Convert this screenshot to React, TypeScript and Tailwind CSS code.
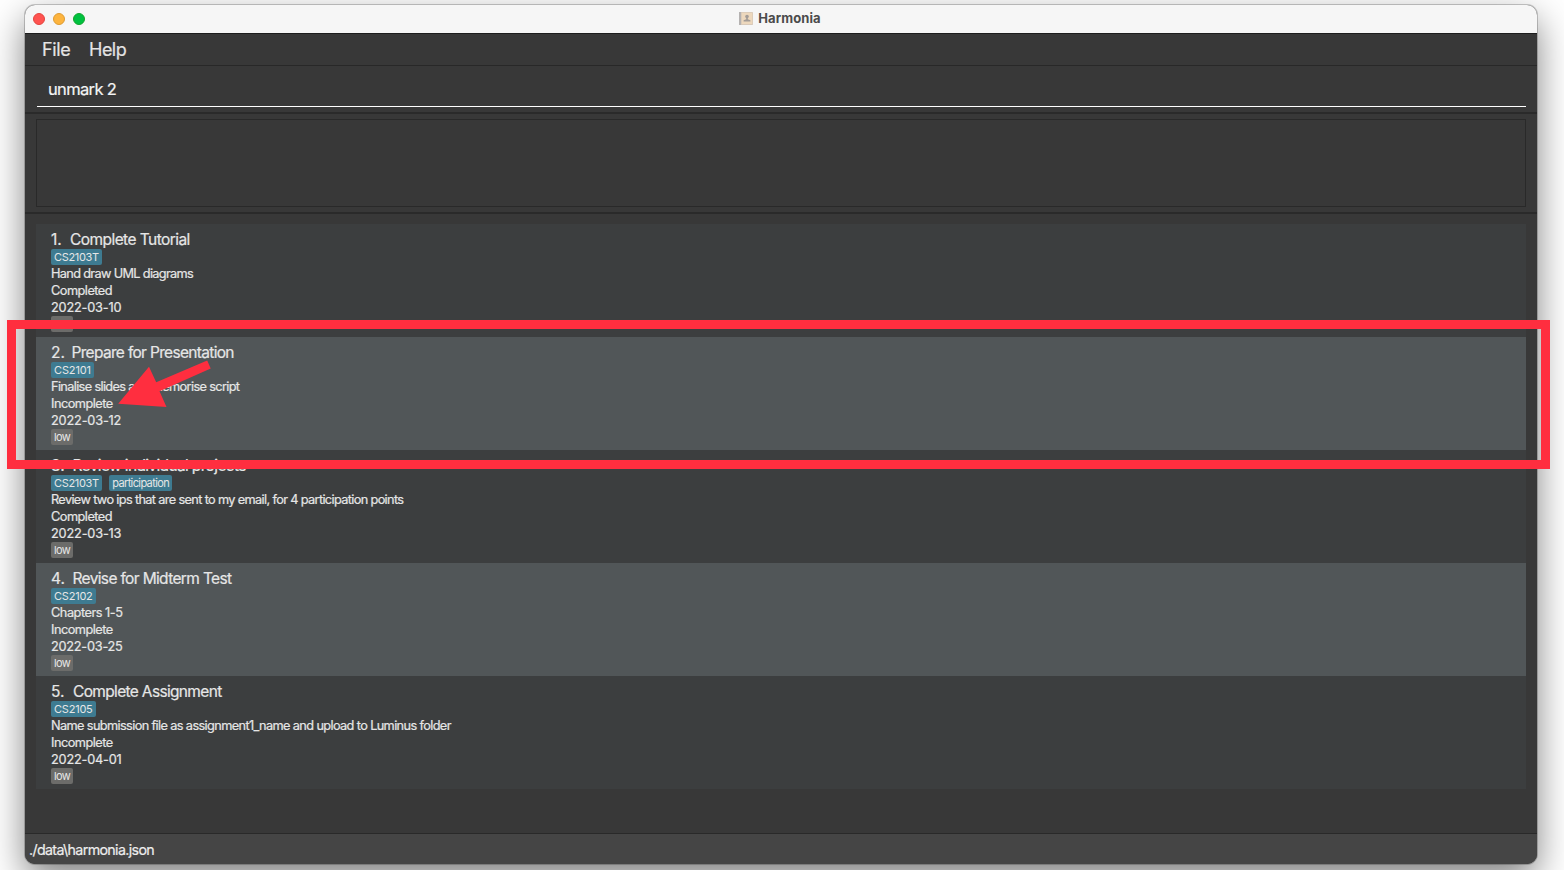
type Label = { text: string; track: string };
type Task = {
  index: string;
  indexWidth: string;
  title: Label;
  tags: Label[];
  description: Label;
  status: string;
  date: Label;
};

const tasks: Task[] = [
  {
    index: "1.",
    indexWidth: "w-[19px]",
    title: { text: "Complete Tutorial", track: "tracking-[-0.56px]" },
    tags: [{ text: "CS2103T", track: "tracking-[-0.32px]" }],
    description: { text: "Hand draw UML diagrams", track: "tracking-[-0.67px]" },
    status: "Completed",
    date: { text: "2022-03-10", track: "tracking-[-0.2px]" },
  },
  {
    index: "2.",
    indexWidth: "w-[20.5px]",
    title: { text: "Prepare for Presentation", track: "tracking-[-0.68px]" },
    tags: [{ text: "CS2101", track: "tracking-[-0.14px]" }],
    description: { text: "Finalise slides and memorise script", track: "tracking-[-0.65px]" },
    status: "Incomplete",
    date: { text: "2022-03-12", track: "tracking-[-0.18px]" },
  },
  {
    index: "3.",
    indexWidth: "w-[21.5px]",
    title: { text: "Review individual projects", track: "tracking-[-0.64px]" },
    tags: [
      { text: "CS2103T", track: "tracking-[-0.32px]" },
      { text: "participation", track: "tracking-[-0.62px]" },
    ],
    description: {
      text: "Review two ips that are sent to my email, for 4 participation points",
      track: "tracking-[-0.65px]",
    },
    status: "Completed",
    date: { text: "2022-03-13", track: "tracking-[-0.18px]" },
  },
  {
    index: "4.",
    indexWidth: "w-[21.5px]",
    title: { text: "Revise for Midterm Test", track: "tracking-[-0.65px]" },
    tags: [{ text: "CS2102", track: "tracking-[-0.22px]" }],
    description: { text: "Chapters 1-5", track: "tracking-[-0.48px]" },
    status: "Incomplete",
    date: { text: "2022-03-25", track: "tracking-[-0.25px]" },
  },
  {
    index: "5.",
    indexWidth: "w-[22px]",
    title: { text: "Complete Assignment", track: "tracking-[-0.66px]" },
    tags: [{ text: "CS2105", track: "tracking-[-0.22px]" }],
    description: {
      text: "Name submission file as assignment1_name and upload to Luminus folder",
      track: "tracking-[-0.63px]",
    },
    status: "Incomplete",
    date: { text: "2022-04-01", track: "tracking-[-0.2px]" },
  },
];

function TaskRow({ task, striped }: { task: Task; striped: boolean }) {
  return (
    <li
      className={`h-[113px] pl-[15px] pt-[5px] text-[12.75px] leading-[17px] text-[#e6e6e6] [-webkit-text-stroke:0.2px_#e6e6e6] ${
        striped ? "bg-[#515658]" : "bg-[#3c3e3f]"
      }`}
    >
      <div className="flex h-5 whitespace-pre text-[15.5px] leading-[21px]">
        <span className={`shrink-0 ${task.indexWidth}`}>{task.index}</span>
        <span className={task.title.track}>{task.title.text}</span>
      </div>
      <div className="flex h-4 gap-[7px]">
        {task.tags.map((tag) => (
          <span
            key={tag.text}
            className={`h-4 rounded-[2px] bg-[#3e7b91] pl-[3px] pr-[3.3px] text-[11px] leading-4 [-webkit-text-stroke:0] ${tag.track}`}
          >
            {tag.text}
          </span>
        ))}
      </div>
      <div className="whitespace-nowrap">
        <p className={task.description.track}>{task.description.text}</p>
        <p className="tracking-[-0.52px]">{task.status}</p>
        <p className={task.date.track}>{task.date.text}</p>
      </div>
      <span className="block h-4 w-[22px] rounded-[2px] bg-[#6c6c6a] pl-[3px] text-[11px] leading-4 tracking-[-0.6px] [-webkit-text-stroke:0]">
        low
      </span>
    </li>
  );
}

function BookIcon() {
  return (
    <svg width="14" height="13" viewBox="0 0 14 13" aria-hidden="true">
      <rect x="0" y="0" width="14" height="13" rx="0.8" fill="#d3c6b8" />
      <rect x="2.6" y="0.6" width="10.8" height="11.6" fill="#edd8bd" />
      <rect x="0" y="0" width="2" height="13" fill="#b5b2b1" />
      <circle cx="8" cy="4.6" r="1.8" fill="#a39c97" />
      <path d="M7.2 5.5h1.6v1.7l2.6 1v1.4H4.6V8.2l2.6-1z" fill="#a39c97" />
    </svg>
  );
}

export default function App() {
  return (
    <div className="relative h-[870px] w-[1564px] overflow-hidden bg-white pl-[25px] pt-[5px] font-['Inter','Liberation_Sans',sans-serif]">
      <div className="flex h-[859px] w-[1512px] flex-col overflow-hidden rounded-[10px] bg-[#383838] shadow-[0_0_0_1px_rgba(0,0,0,0.2),0_14px_36px_rgba(0,0,0,0.5)]">
        <header className="grid h-[29px] shrink-0 grid-cols-3 items-center border-b border-[#1d1d1d] bg-[#f6f6f6]">
          <div className="flex gap-2 pl-2">
            <span className="size-3 rounded-full border border-[#e2453f] bg-[#ff5350]" />
            <span className="size-3 rounded-full border border-[#dd9b33] bg-[#fdb43e]" />
            <span className="size-3 rounded-full border border-[#12a52c] bg-[#00c140]" />
          </div>
          <div className="flex items-center justify-center gap-[5px] pr-[2px]">
            <span className="-mt-px">
              <BookIcon />
            </span>
            <span className="-mt-[2px] text-[13px] font-bold leading-4 tracking-[0.1px] text-[#4b4b4b]">
              Harmonia
            </span>
          </div>
        </header>

        <nav className="flex h-8 shrink-0 gap-[18px] border-b border-[#282828] pl-[17px] text-[18px] leading-[32px] text-[#e4e4e4] [-webkit-text-stroke:0.2px_#e4e4e4]">
          <span className="w-[29px] tracking-[-0.35px]">File</span>
          <span className="tracking-[-0.5px]">Help</span>
        </nav>

        <section className="h-[48px] shrink-0 border-b-2 border-[#2a2a2a] pl-3 pr-[11px]">
          <div className="h-[41px] border-b border-white pl-[11px] pt-[1px] text-[16.5px] leading-[44px] tracking-[-0.65px] text-[#f4f4f4] [-webkit-text-stroke:0.2px_#f4f4f4]">
            unmark 2
          </div>
        </section>

        <section className="h-[100px] shrink-0 border-b-2 border-[#2a2a2a] pl-[11px] pr-[11px] pt-[5px]">
          <div className="h-[88px] border border-[#292929]" />
        </section>

        <ul className="flex-1 px-[11px] pt-[10px]">
          {tasks.map((task, i) => (
            <TaskRow key={task.index} task={task} striped={i % 2 === 1} />
          ))}
        </ul>

        <footer className="h-[31px] shrink-0 border-t border-[#292929] bg-[#454545] pl-1 text-[14.25px] leading-[32px] tracking-[-0.65px] text-[#ededed] [-webkit-text-stroke:0.2px_#ededed]">
          ./data\harmonia.json
        </footer>
      </div>

      <div className="absolute left-[7px] top-[320px] h-[149px] w-[1543px] border-[9px] border-[#ff2e3f]" />
      <svg
        className="absolute left-[118px] top-[358px]"
        width="96"
        height="52"
        viewBox="118 358 96 52"
        aria-hidden="true"
      >
        <path
          d="M118.2 403.8 149 366.8 156.2 382.2 207.2 360.6 210.7 368.4 159.5 391.2 166.5 407z"
          fill="#ff2e3f"
        />
      </svg>
    </div>
  );
}
